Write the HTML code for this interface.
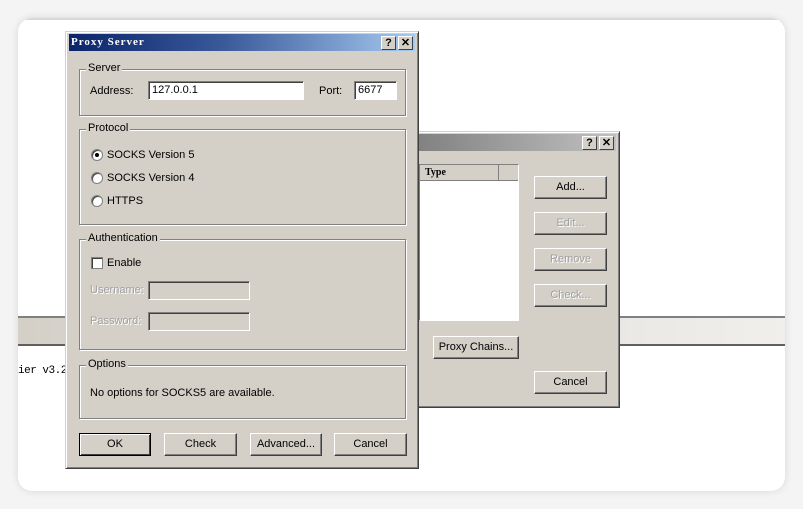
<!DOCTYPE html>
<html><head><meta charset="utf-8"><style>
*{box-sizing:border-box;margin:0;padding:0}
body{width:803px;height:509px;background:#f4f4f4;position:relative;overflow:hidden;font-family:"Liberation Sans",sans-serif;font-size:11px;color:#000}
.abs{position:absolute}
.card{left:18px;top:18px;width:767px;height:473px;background:#fff;border-radius:14px;box-shadow:0 0 8px rgba(0,0,0,.12);overflow:hidden}
.dlg{background:#d4d0c8;border:1px solid;border-color:#d4d0c8 #404040 #404040 #d4d0c8;box-shadow:inset 1px 1px 0 #fff,inset -1px -1px 0 #808080}
.tb{position:absolute;left:3px;right:3px;top:2px;height:17px}
.tbtn{position:absolute;top:2px;width:15px;height:14px;background:#d4d0c8;border:1px solid;border-color:#fff #404040 #404040 #fff;font:bold 11px "Liberation Sans",sans-serif;text-align:center;line-height:12px}
.grp{position:absolute;border:1px solid #808080;box-shadow:1px 1px 0 #fff,inset 1px 1px 0 #fff}
.grp>.lg{position:absolute;top:-8px;left:6px;background:#d4d0c8;padding:0 2px;color:#000}
.inp{position:absolute;background:#fff;border:1px solid;border-color:#808080 #fff #fff #808080;box-shadow:inset 1px 1px 0 #404040;padding:2px 3px;font-size:11px}
.inp.dis{background:#d4d0c8}
.btn{position:absolute;height:23px;background:#d4d0c8;border:1px solid;border-color:#fff #404040 #404040 #fff;box-shadow:inset -1px -1px 0 #808080;text-align:center;line-height:20px}
.btn.dis{color:#a0a0a0;text-shadow:1px 1px 0 #fff}
.rad{position:absolute;width:12px;height:12px;border-radius:50%;background:#fff;border:1px solid #808080;box-shadow:inset 1px 1px 0 #404040}
.lbl{position:absolute;white-space:nowrap}
</style></head><body>
<div class="abs card">
 <div class="abs" style="left:0;top:0;width:767px;height:2px;background:#d8d8d8"></div>
 <div class="abs" style="left:0;top:298px;width:767px;height:30px;background:linear-gradient(90deg,#d4d0c8,#f0efec);border-top:2px solid #808080;border-bottom:2px solid #606060"></div>
 <div class="lbl" style="left:0;top:347px;font:11px 'Liberation Mono',monospace;letter-spacing:-0.5px">ier v3.28</div>
</div>

<!-- back dialog -->
<div class="abs dlg" style="left:410px;top:131px;width:210px;height:277px">
 <div class="tb" style="background:linear-gradient(90deg,#808080,#c0c0c0)">
  <div class="tbtn" style="right:19px">?</div><div class="tbtn" style="right:2px">✕</div>
 </div>
 <div class="abs" style="left:8px;top:32px;width:100px;height:157px;background:#fff;border:1px solid;border-color:#808080 #fff #fff #808080">
  <div class="abs" style="left:0;top:0;width:98px;height:16px;background:#d4d0c8;border-bottom:1px solid #808080"></div>
  <div class="abs" style="left:78px;top:0;width:1px;height:16px;background:#808080"></div>
  <div class="lbl" style="left:5px;top:2px;font:bold 10px 'Liberation Serif',serif">Type</div>
 </div>
 <div class="btn" style="left:123px;top:44px;width:73px">Add...</div>
 <div class="btn dis" style="left:123px;top:80px;width:73px">Edit...</div>
 <div class="btn dis" style="left:123px;top:116px;width:73px">Remove</div>
 <div class="btn dis" style="left:123px;top:152px;width:73px">Check...</div>
 <div class="btn" style="left:22px;top:204px;width:86px">Proxy Chains...</div>
 <div class="btn" style="left:123px;top:239px;width:73px">Cancel</div>
</div>

<!-- front dialog -->
<div class="abs dlg" style="left:65px;top:31px;width:354px;height:438px">
 <div class="tb" style="background:linear-gradient(90deg,#0a246a,#3a5a9a 45%,#a6caf0)">
  <div class="lbl" style="left:2px;top:2px;color:#fff;font:bold 11px 'Liberation Serif',serif;letter-spacing:1px">Proxy Server</div>
  <div class="tbtn" style="right:19px">?</div><div class="tbtn" style="right:2px">✕</div>
 </div>
 <div class="grp" style="left:13px;top:37px;width:327px;height:47px"><span class="lg">Server</span></div>
 <div class="lbl" style="left:24px;top:53px">Address:</div>
 <div class="inp" style="left:82px;top:49px;width:156px;height:19px">127.0.0.1</div>
 <div class="lbl" style="left:253px;top:53px">Port:</div>
 <div class="inp" style="left:288px;top:49px;width:43px;height:19px">6677</div>

 <div class="grp" style="left:13px;top:97px;width:327px;height:96px"><span class="lg">Protocol</span></div>
 <div class="rad" style="left:25px;top:117px"><div class="abs" style="left:3px;top:3px;width:4px;height:4px;border-radius:50%;background:#000"></div></div>
 <div class="lbl" style="left:41px;top:117px">SOCKS Version 5</div>
 <div class="rad" style="left:25px;top:140px"></div>
 <div class="lbl" style="left:41px;top:140px">SOCKS Version 4</div>
 <div class="rad" style="left:25px;top:163px"></div>
 <div class="lbl" style="left:41px;top:163px">HTTPS</div>

 <div class="grp" style="left:13px;top:207px;width:327px;height:111px"><span class="lg">Authentication</span></div>
 <div class="abs" style="left:25px;top:225px;width:12px;height:12px;background:#fff;border:1px solid #808080;box-shadow:inset 1px 1px 0 #404040"></div>
 <div class="lbl" style="left:41px;top:225px">Enable</div>
 <div class="lbl" style="left:24px;top:252px;color:#a0a0a0;text-shadow:1px 1px 0 #fff">Username:</div>
 <div class="inp dis" style="left:82px;top:249px;width:102px;height:19px"></div>
 <div class="lbl" style="left:24px;top:283px;color:#a0a0a0;text-shadow:1px 1px 0 #fff">Password:</div>
 <div class="inp dis" style="left:82px;top:280px;width:102px;height:19px"></div>

 <div class="grp" style="left:13px;top:333px;width:327px;height:54px"><span class="lg">Options</span></div>
 <div class="lbl" style="left:24px;top:355px">No options for SOCKS5 are available.</div>

 <div class="btn" style="left:13px;top:401px;width:72px;border:1px solid #000;box-shadow:inset 1px 1px 0 #fff,inset -1px -1px 0 #404040">OK</div>
 <div class="btn" style="left:98px;top:401px;width:73px">Check</div>
 <div class="btn" style="left:184px;top:401px;width:72px">Advanced...</div>
 <div class="btn" style="left:268px;top:401px;width:73px">Cancel</div>
</div>
</body></html>
